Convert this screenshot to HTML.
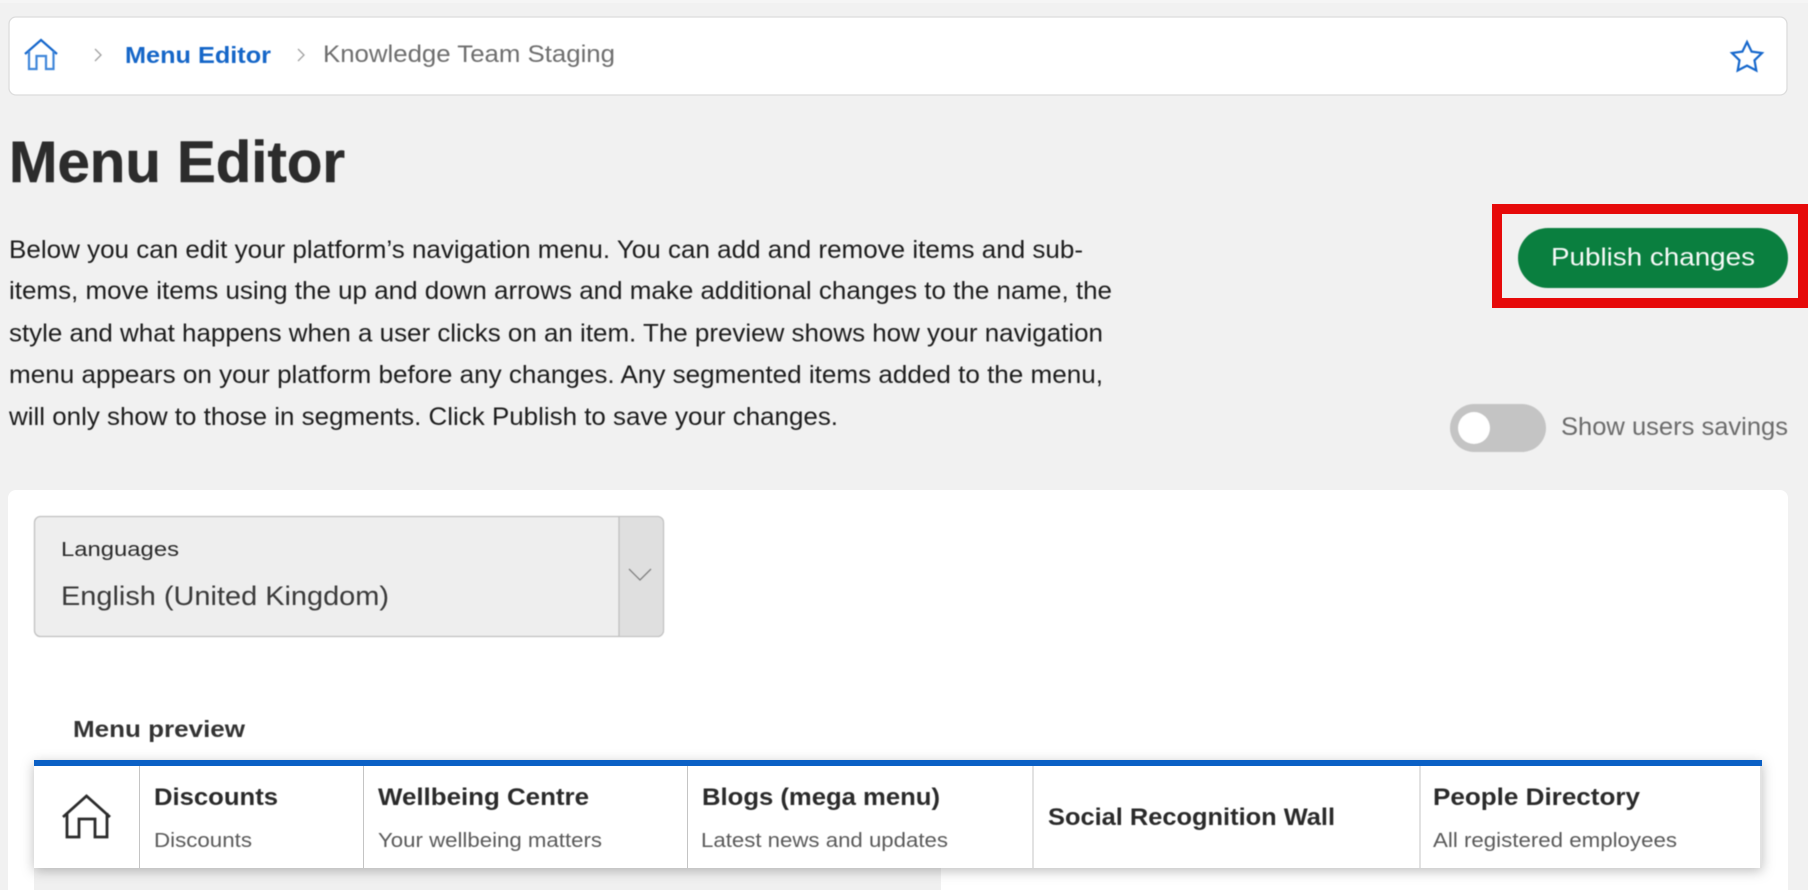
<!DOCTYPE html>
<html lang="en">
<head>
<meta charset="utf-8">
<title>Menu Editor</title>
<style>
html,body{margin:0;padding:0;width:1808px;height:890px;overflow:hidden;background:#f1f1f1}
svg{display:block;position:absolute;left:0;top:0}
text{font-family:"Liberation Sans",Arial,sans-serif;white-space:pre}
.soft{filter:blur(.4px)}
.b{font-weight:700}
</style>
</head>
<body>
<svg width="1808" height="890" viewBox="0 0 1808 890" xmlns="http://www.w3.org/2000/svg">
<defs>
<filter id="navshadow" x="-5%" y="-20%" width="110%" height="150%">
<feDropShadow dx="0" dy="3" stdDeviation="6" flood-color="#000" flood-opacity=".26"/>
</filter>
</defs>
<rect width="1808" height="890" fill="#f1f1f1"/>
<rect width="1808" height="3" fill="#f5f5f5"/>
<rect x="9" y="17" width="1778" height="78" rx="7" fill="#fff" stroke="#dcdcdc" stroke-width="1.3"/>
<g class="soft">
<g fill="none" stroke="#1567cc" stroke-width="2.2">
<path d="M25 54 L41 40 L57 54"/>
<path d="M29 51 V69 H36.5 V56 H46 V69 H53.5 V51" stroke="#3f86da"/>
</g>
<path d="M95 49 L101 55 L95 61" fill="none" stroke="#a0a0a0" stroke-width="1.3"/>
<path d="M298 49 L304 55 L298 61" fill="none" stroke="#a0a0a0" stroke-width="1.3"/>
<text class="b" x="125" y="63" font-size="23.5" fill="#1566c8" textLength="146" lengthAdjust="spacingAndGlyphs">Menu Editor</text>
<text x="323" y="62" font-size="24" fill="#6e6e6e" textLength="292" lengthAdjust="spacingAndGlyphs">Knowledge Team Staging</text>
<polygon points="1747,42 1751.6,51.6 1762,53 1754.5,60.3 1756.3,70.5 1747,65.6 1737.7,70.5 1739.5,60.3 1732,53 1742.4,51.6" fill="none" stroke="#1567cc" stroke-width="2.2"/>
<text class="b" x="9" y="182" font-size="58" fill="#2c2c2c" stroke="#2c2c2c" stroke-width=".5" textLength="336" lengthAdjust="spacingAndGlyphs">Menu Editor</text>
<g font-size="25" fill="#1c1c1c">
<text x="9" y="258" textLength="1074" lengthAdjust="spacingAndGlyphs">Below you can edit your platform’s navigation menu. You can add and remove items and sub-</text>
<text x="9" y="299" textLength="1103" lengthAdjust="spacingAndGlyphs">items, move items using the up and down arrows and make additional changes to the name, the</text>
<text x="9" y="341.5" textLength="1094" lengthAdjust="spacingAndGlyphs">style and what happens when a user clicks on an item. The preview shows how your navigation</text>
<text x="9" y="383" textLength="1094" lengthAdjust="spacingAndGlyphs">menu appears on your platform before any changes. Any segmented items added to the menu,</text>
<text x="9" y="425" textLength="829" lengthAdjust="spacingAndGlyphs">will only show to those in segments. Click Publish to save your changes.</text>
</g>
</g>
<rect x="1497" y="209" width="306" height="94" fill="none" stroke="#e60a0a" stroke-width="10"/>
<g class="soft">
<rect x="1518" y="228" width="270" height="60" rx="30" fill="#0a7f3f"/>
<text x="1551" y="265.5" font-size="25" fill="#f7faf8" textLength="204" lengthAdjust="spacingAndGlyphs">Publish changes</text>
<rect x="1450" y="404" width="96" height="48" rx="24" fill="#c4c4c4"/>
<circle cx="1474" cy="428" r="16" fill="#fff"/>
<text x="1561" y="435" font-size="25" fill="#6b6b6b" textLength="227" lengthAdjust="spacingAndGlyphs">Show users savings</text>
</g>
<path d="M8 890 V498 a8 8 0 0 1 8 -8 H1780 a8 8 0 0 1 8 8 V890 Z" fill="#fff"/>
<g class="soft">
<rect x="34.5" y="516.5" width="629" height="120" rx="6" fill="#eee" stroke="#c0c0c0" stroke-width="1.3"/>
<path d="M619 517 H657 a6 6 0 0 1 6 6 V630 a6 6 0 0 1 -6 6 H619 Z" fill="#dfdfdf"/>
<path d="M619 517 V636" stroke="#c0c0c0" stroke-width="1.3"/>
<path d="M629 569 L640 580 L651 569" fill="none" stroke="#808080" stroke-width="1.3"/>
<text x="61" y="556" font-size="20" fill="#2a2a2a" textLength="118" lengthAdjust="spacingAndGlyphs">Languages</text>
<text x="61" y="605" font-size="27" fill="#3a3a3a" textLength="328" lengthAdjust="spacingAndGlyphs">English (United Kingdom)</text>
<text class="b" x="73" y="737" font-size="23.5" fill="#333" textLength="172" lengthAdjust="spacingAndGlyphs">Menu preview</text>
</g>
<rect x="34" y="868" width="907" height="22" fill="#f0f0f0"/>
<rect x="34" y="760" width="1728" height="108" fill="#fff" filter="url(#navshadow)"/>
<rect x="34" y="760" width="1728" height="6" fill="#0b60c5"/>
<g stroke="#c4c4c4" stroke-width="1">
<path d="M139.5 766 V868"/>
<path d="M363.5 766 V868"/>
<path d="M687.5 766 V868"/>
<path d="M1033 766 V868"/>
<path d="M1420 766 V868"/>
<path d="M1761 766 V868"/>
</g>
<g class="soft">
<g fill="none" stroke="#2b2b2b" stroke-width="2.8">
<path d="M63 817 L86.5 796 L110 817"/>
<path d="M67 813 V837 H79 V819 H95 V837 H107 V813"/>
</g>
<g font-size="24" fill="#2a2a2a" class="b">
<text x="154" y="805" textLength="124" lengthAdjust="spacingAndGlyphs">Discounts</text>
<text x="378" y="805" textLength="211" lengthAdjust="spacingAndGlyphs">Wellbeing Centre</text>
<text x="702" y="805" textLength="238" lengthAdjust="spacingAndGlyphs">Blogs (mega menu)</text>
<text x="1048" y="825" textLength="287" lengthAdjust="spacingAndGlyphs">Social Recognition Wall</text>
<text x="1433" y="805" textLength="207" lengthAdjust="spacingAndGlyphs">People Directory</text>
</g>
<g font-size="20" fill="#5a5a5a">
<text x="154" y="847" textLength="98" lengthAdjust="spacingAndGlyphs">Discounts</text>
<text x="378" y="847" textLength="224" lengthAdjust="spacingAndGlyphs">Your wellbeing matters</text>
<text x="701" y="847" textLength="247" lengthAdjust="spacingAndGlyphs">Latest news and updates</text>
<text x="1433" y="847" textLength="244" lengthAdjust="spacingAndGlyphs">All registered employees</text>
</g>
</g>
</svg>
</body>
</html>
